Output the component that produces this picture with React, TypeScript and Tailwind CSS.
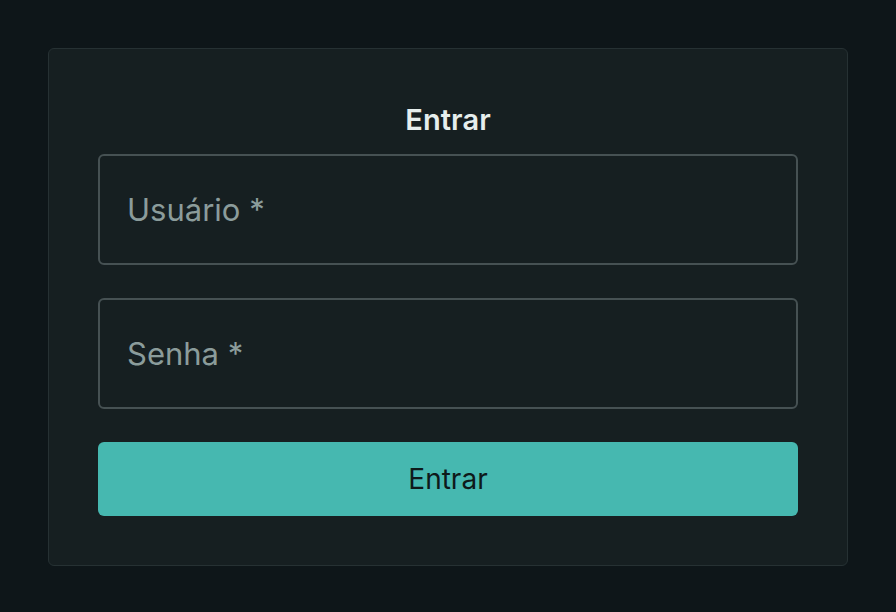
import { useState } from 'react';

export default function App() {
  const [user, setUser] = useState('');
  const [pass, setPass] = useState('');

  return (
    <div
      className="w-[896px] h-[612px] bg-[#0e1619] pt-[48px] px-[48px]"
      style={{ fontFamily: 'Inter, "Noto Sans", sans-serif' }}
    >
      {/* Card */}
      <form
        onSubmit={(e) => e.preventDefault()}
        className="w-[800px] h-[518px] bg-[#161f21] border border-[#263133] rounded-[6px] px-[49px] pt-[53px] flex flex-col"
      >
        <h1 className="text-center text-[29px] leading-[36px] font-semibold text-[#e6eeed] tracking-[0.1px]">
          Entrar
        </h1>

        <input
          value={user}
          onChange={(e) => setUser(e.target.value)}
          placeholder="Usuário *"
          className="mt-[16px] h-[111px] w-full bg-transparent border-2 border-[#465153] rounded-[6px] px-[27px] text-[31px] text-[#e6eeed] placeholder:text-[#8b9c9b] outline-none"
        />

        <input
          type="password"
          value={pass}
          onChange={(e) => setPass(e.target.value)}
          placeholder="Senha *"
          className="mt-[33px] h-[111px] w-full bg-transparent border-2 border-[#465153] rounded-[6px] px-[27px] text-[31px] text-[#e6eeed] placeholder:text-[#8b9c9b] outline-none"
        />

        <button
          type="submit"
          className="mt-[33px] h-[74px] w-full bg-[#46b8b0] rounded-[6px] text-[28px] text-[#0e1a1a] font-normal"
        >
          Entrar
        </button>
      </form>
    </div>
  );
}
